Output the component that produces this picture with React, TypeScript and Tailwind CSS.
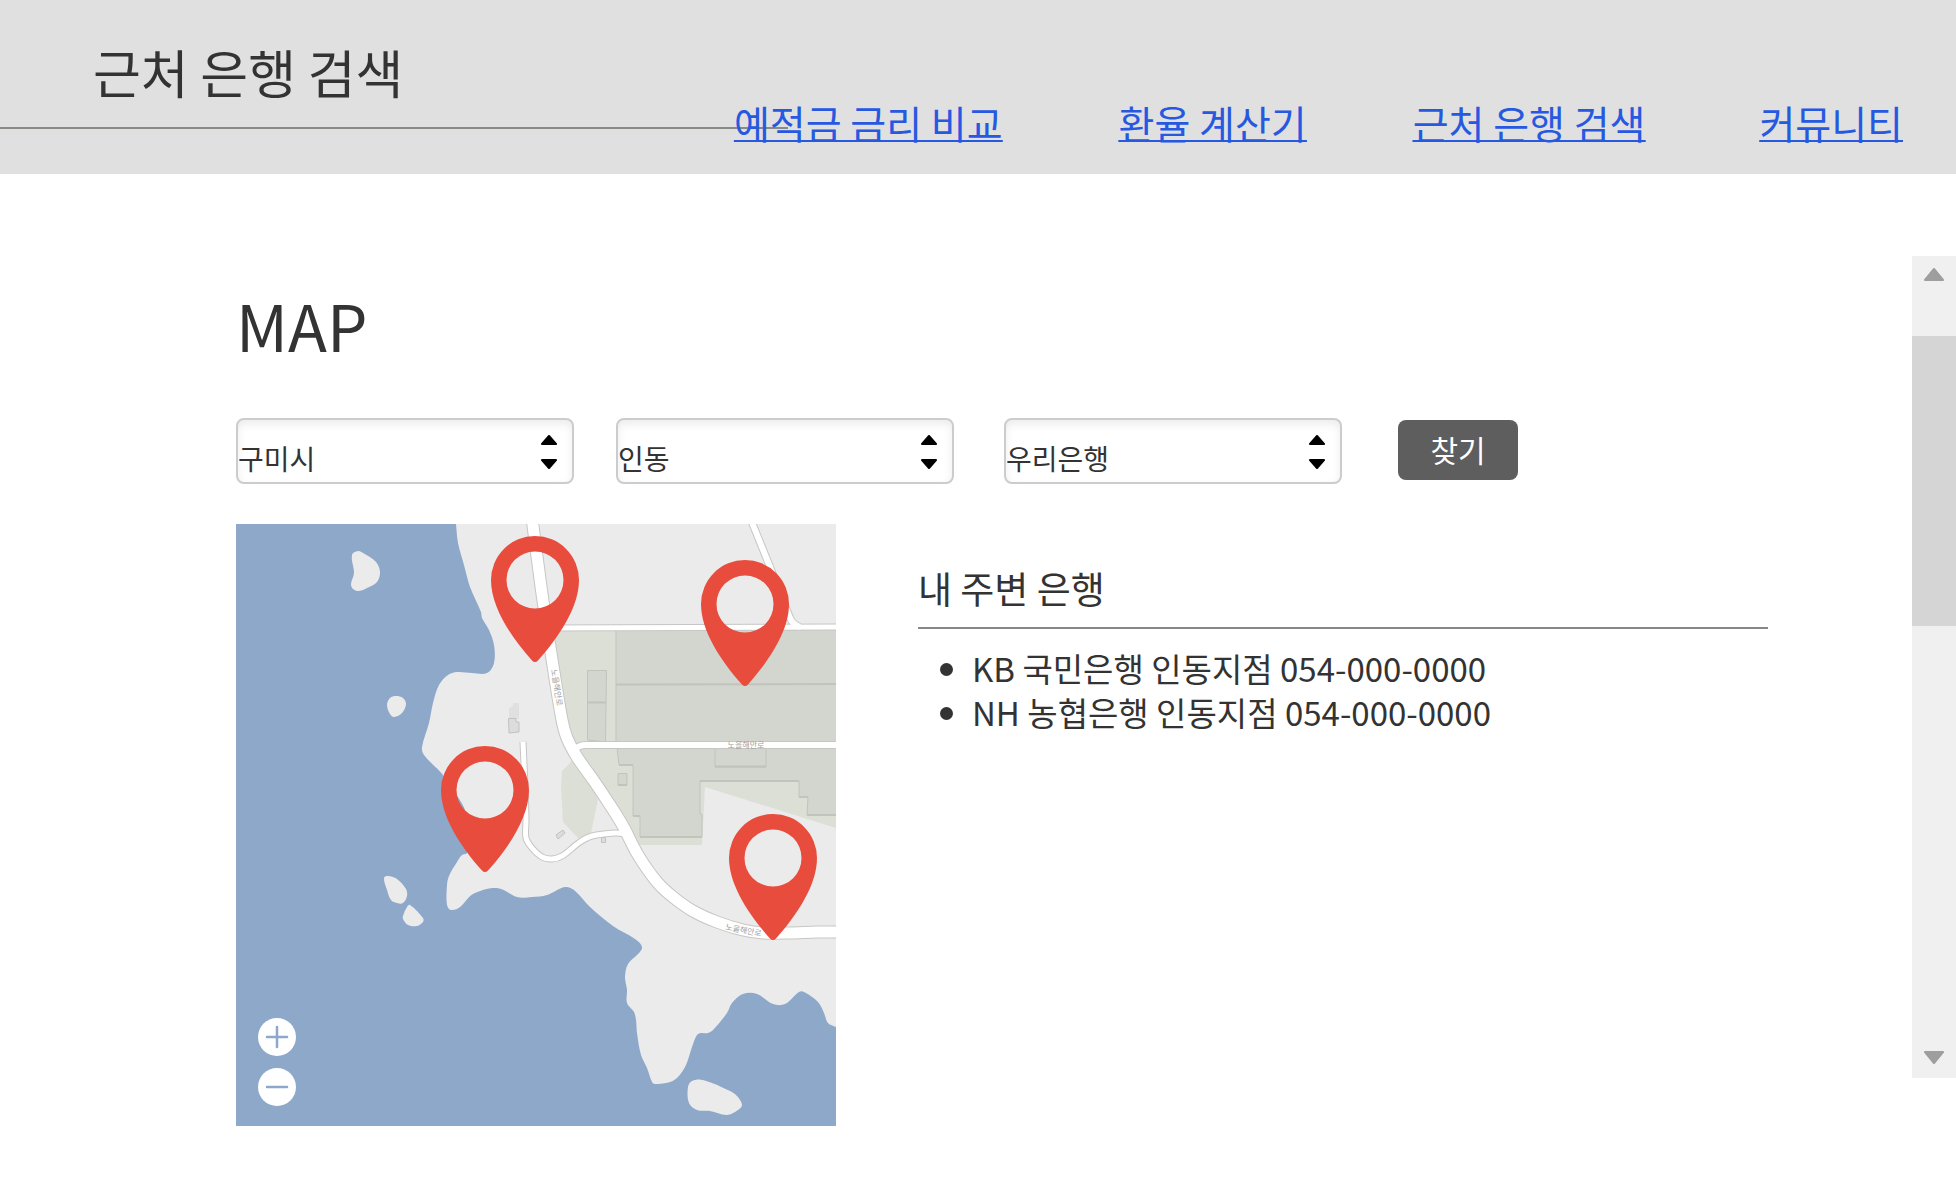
type Point = [number, number];

/** Smooth curve through the points, as SVG path data; handles are a third of each segment long. */
function smooth(points: Point[], closed = false): string {
  const n = points.length;
  const at = (i: number): Point =>
    closed ? points[(i + n) % n] : points[Math.max(0, Math.min(n - 1, i))];
  const handle = (from: Point, to: Point, length: number): Point => {
    const dx = to[0] - from[0];
    const dy = to[1] - from[1];
    const k = length / 3 / (Math.hypot(dx, dy) || 1);
    return [dx * k, dy * k];
  };
  let d = `M${points[0][0]} ${points[0][1]}`;
  const count = closed ? n : n - 1;
  for (let i = 0; i < count; i++) {
    const [p0, p1, p2, p3] = [at(i - 1), at(i), at(i + 1), at(i + 2)];
    const length = Math.hypot(p2[0] - p1[0], p2[1] - p1[1]);
    const a = handle(p0, p2, length);
    const b = handle(p1, p3, length);
    d += `C${p1[0] + a[0]} ${p1[1] + a[1]} ${p2[0] - b[0]} ${p2[1] - b[1]} ${p2[0]} ${p2[1]}`;
  }
  return closed ? d + 'Z' : d;
}

const COAST: Point[] = [
  [220, 0], [222, 19], [228, 41], [234, 63], [245, 88], [246, 94], [253, 106], [258, 121],
  [258, 139], [251, 149], [236, 149], [221, 148], [212, 151], [203, 161], [197, 179],
  [193, 199], [186, 223], [188, 231], [207, 251], [222, 273], [229, 286], [236, 310],
  [231, 329], [226, 331], [221, 338], [213, 352], [211, 361], [211, 381], [215, 386],
  [224, 383], [237, 370], [261, 364], [281, 373], [296, 373], [311, 371], [329, 363],
  [338, 366], [354, 383], [377, 402], [399, 415], [406, 423], [402, 430], [392, 440],
  [389, 453], [391, 466], [391, 479], [398, 488], [400, 496], [401, 509], [405, 531],
  [411, 544], [416, 558], [419, 560], [434, 558], [442, 553], [450, 541], [456, 523],
  [461, 511], [465, 509], [472, 509], [477, 506], [491, 489], [496, 479], [507, 470],
  [521, 470], [537, 480], [549, 480], [563, 468], [568, 468], [582, 478], [588, 489],
  [592, 499], [600, 503],
];

const ISLANDS: Point[][] = [
  [[116, 31], [122, 27], [127, 29], [140, 38], [144, 48], [141, 58], [131, 64], [123, 67], [117, 65], [115, 60], [118, 49]],
  [[160, 172], [167, 174], [170, 180], [166, 189], [158, 193], [154, 190], [151, 181], [154, 174]],
  [[148, 354], [152, 352], [161, 355], [170, 365], [171, 372], [167, 379], [161, 379], [155, 376], [151, 366]],
  [[174, 381], [187, 394], [187, 398], [181, 402], [172, 401], [167, 395], [167, 392], [171, 383]],
  [[452, 563], [456, 557], [467, 556], [494, 567], [501, 572], [506, 581], [502, 586], [491, 591], [474, 587], [461, 586], [453, 579]],
];

const ROADS: { path: string; width: number }[] = [
  {
    path: smooth([[287, 218], [289, 263], [290, 296], [290, 314], [296, 324], [306, 333], [316, 335], [326, 332], [344, 318], [356, 312], [379, 309], [392, 310]]),
    width: 5,
  },
  { path: 'M515 -4L532 38L554 94Q557 101 564 103', width: 6 },
  { path: 'M308 104L600 103', width: 5 },
  { path: 'M338 226Q343 221 350 221H600', width: 6 },
  {
    path: smooth([[296, -6], [302, 40], [308, 84], [315, 129], [326, 196], [331, 214], [341, 233], [358, 257], [374, 281], [387, 302], [402, 331], [421, 358], [437, 373], [457, 387], [481, 398], [507, 406], [527, 409], [554, 409], [581, 408], [606, 408]]),
    width: 11,
  },
];

const PINS: Point[] = [[299, 56], [509, 80], [249, 266], [537, 334]];

function MapDrawing() {
  return (
    <svg viewBox="0 0 600 602" className="block w-full" role="img" aria-label="지도">
      <rect width="600" height="602" fill="#8ea8ca" />
      <path d={smooth(COAST) + 'V0Z'} fill="#ebebeb" />
      {ISLANDS.map((island, i) => (
        <path key={i} d={smooth(island, true)} fill="#ebebeb" />
      ))}

      <path d="M316 107L600 105V304L469 263L466 321H404L380 296L326 210Z" fill="#dcdfd6" />
      <path d="M336 237L326 247L325 263L327 298L342 314L354 313L362 276L350 250Z" fill="#dcdfd6" />

      <g fill="#d3d6cf" stroke="#c0c4bd" strokeWidth="1">
        <path d="M380 104H602V218H380Z" />
        <path d="M381 224L383 241H397V292H404V313H466V290H464V257H563V273H572L571 291H602V224Z" />
        <path d="M479 224V243H530V224" />
        <path d="M382 249.500H391V261H382Z" />
        <path d="M351.500 146.500H370.500L369.500 218L351.500 216Z" />
      </g>
      <g fill="none" stroke="#c0c4bd" strokeWidth="2">
        <path d="M380 160.500L602 160" />
        <path d="M351 178.500H370" />
        <path d="M404 313H466M479 242.500H530M382 261H391M383 241H397M397 292H404M464 257H563M563 273H572M571 291H602" />
      </g>
      <path d="M273 184L277 182V179H283V195H273Z" fill="#e0e0e0" />
      <g fill="#dcdcdc" stroke="#c2c2c2" strokeWidth="1">
        <path d="M272.500 194.500H280V198H283V208L273 209Z" />
        <path d="M320 311L327 306L329 309L322 315Z" />
        <path d="M365.500 313.500H369.500V318.500H365.500Z" />
      </g>

      {ROADS.map((road, i) => (
        <path key={i} d={road.path} fill="none" stroke="#c6c6c4" strokeWidth={road.width + 2} />
      ))}
      {ROADS.map((road, i) => (
        <path key={i} d={road.path} fill="none" stroke="#ffffff" strokeWidth={road.width} />
      ))}

      <g fill="#a0a0a0" fontSize="8" textAnchor="middle">
        <text transform="translate(318 164) rotate(81)">노을해안로</text>
        <text x="510" y="224">노을해안로</text>
        <text transform="translate(507 409) rotate(11)">노을해안로</text>
      </g>

      {PINS.map(([x, y]) => (
        <path
          key={`${x}-${y}`}
          transform={`translate(${x} ${y})`}
          fill="#e84c3d"
          fillRule="evenodd"
          d="M-44 0A44 44 0 0 1 44 0C44 27 24 57 3 80.500Q0 83.500 -3 80.500C-24 57 -44 27 -44 0ZM-28.500 0A28.500 28.500 0 0 0 28.500 0A28.500 28.500 0 0 0 -28.500 0Z"
        />
      ))}
    </svg>
  );
}

function ZoomButton({ label, path }: { label: string; path: string }) {
  return (
    <button type="button" aria-label={label} className="size-[38px] rounded-full bg-white">
      <svg viewBox="0 0 38 38" fill="none" stroke="#8ea8ca" strokeWidth="2.500" strokeLinecap="round">
        <path d={path} />
      </svg>
    </button>
  );
}

function Select({ label, value }: { label: string; value: string }) {
  return (
    <div className="relative w-[338px]">
      <select
        aria-label={label}
        defaultValue={value}
        className="block h-[66px] w-full appearance-none rounded-lg border-2 border-[#cccccc] bg-white pt-[14px] text-[28px] leading-10 text-[#333333] shadow-[inset_0_4px_8px_rgba(0,0,0,0.08)]"
      >
        <option>{value}</option>
      </select>
      <svg
        viewBox="0 0 16 34"
        className="pointer-events-none absolute top-[17px] right-[17px] h-[34px] w-4"
        stroke="#000000"
        strokeWidth="2"
        strokeLinejoin="round"
        aria-hidden="true"
      >
        <path d="M8 1L15 9H1ZM8 33L15 25H1Z" />
      </svg>
    </div>
  );
}

function ScrollButton({ label, path }: { label: string; path: string }) {
  return (
    <button type="button" aria-label={label} className="flex justify-center pt-3 pb-[14px]">
      <svg viewBox="0 0 20 13" className="h-[13px] w-5" fill="#9e9e9e" stroke="#9e9e9e" strokeWidth="2" strokeLinejoin="round">
        <path d={path} />
      </svg>
    </button>
  );
}

export default function App() {
  return (
    <div className="min-h-screen bg-white font-['Noto_Sans_CJK_KR',sans-serif] text-[#333333]">
      <header className="relative flex h-[174px] items-start justify-between bg-[#e0e0e0]">
        <div className="absolute top-[127px] left-0 h-0.5 w-[788px] bg-[#888a85]" />
        <h1 className="pt-[34px] pl-[93px] text-[52px] leading-[76px]">근처 은행 검색</h1>
        <nav className="relative flex pt-[94px] pr-[53px] text-[39px] leading-[56px] text-[#2759e0] underline decoration-2 [text-decoration-skip-ink:none]">
          <a href="#rates">예적금 금리 비교</a>
          <a href="#exchange" className="ml-[116px]">환율 계산기</a>
          <a href="#banks" className="ml-[106px]">근처 은행 검색</a>
          <a href="#community" className="ml-[114px]">커뮤니티</a>
        </nav>
      </header>

      <div className="flex items-start">
        <main className="min-w-0 flex-1 pl-[236px]">
          <h2 className="pt-[103px] text-[64px] leading-[94px]">MAP</h2>

          <form className="mt-[47px] flex items-start">
            <Select label="도시" value="구미시" />
            <div className="ml-[42px]">
              <Select label="동" value="인동" />
            </div>
            <div className="ml-[50px]">
              <Select label="은행" value="우리은행" />
            </div>
            <button type="button" className="mt-0.5 ml-14 h-[60px] w-[120px] rounded-lg bg-[#5e5e5e] pb-0.5 text-[30px] leading-[44px] text-white">
              찾기
            </button>
          </form>

          <div className="mt-10 flex items-start">
            <div className="relative w-[600px] shrink-0">
              <MapDrawing />
              <div className="absolute bottom-5 left-[22px] flex flex-col gap-3">
                <ZoomButton label="확대" path="M9 19H29M19 9V29" />
                <ZoomButton label="축소" path="M9 19H29" />
              </div>
            </div>

            <section className="mr-36 ml-[82px] flex-1 pt-[38px]">
              <h3 className="border-b-2 border-[#888888] pb-[13px] text-[37px] leading-[52px]">내 주변 은행</h3>
              <ul className="mt-[17px] list-disc pl-[54px] text-[33px] leading-[44px]">
                <li>KB 국민은행 인동지점 054-000-0000</li>
                <li>NH 농협은행 인동지점 054-000-0000</li>
              </ul>
            </section>
          </div>
        </main>

        <div className="mt-[82px] flex h-[822px] w-11 shrink-0 flex-col bg-[#f0f0f0]">
          <ScrollButton label="위로" path="M10 1L19 12H1Z" />
          <div className="mt-[41px] h-[290px] bg-[#d5d5d5]" />
          <div className="mt-auto flex flex-col">
            <ScrollButton label="아래로" path="M10 12L19 1H1Z" />
          </div>
        </div>
      </div>
    </div>
  );
}
